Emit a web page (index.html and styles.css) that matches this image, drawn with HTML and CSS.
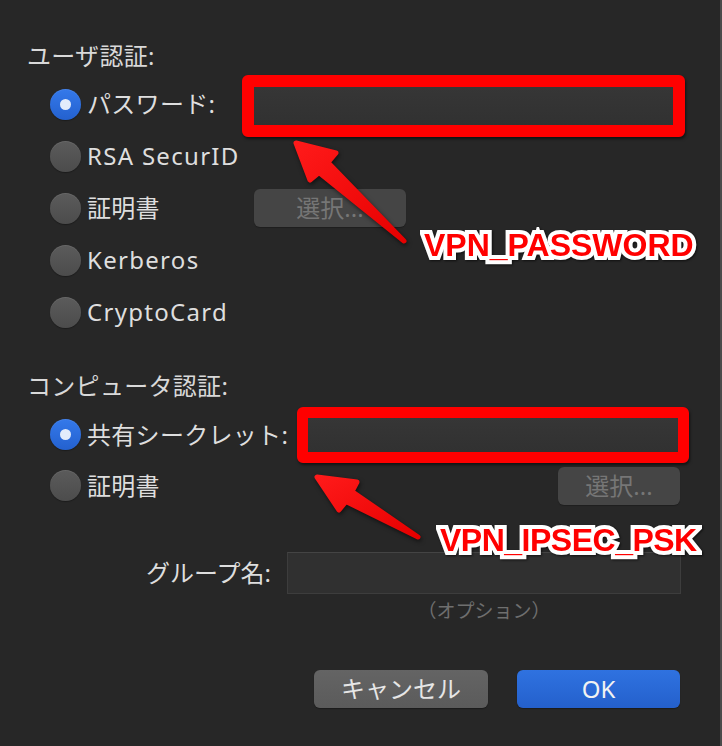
FILE: index.html
```html
<!DOCTYPE html>
<html lang="ja">
<head>
<meta charset="utf-8">
<link rel="stylesheet" href="styles.css">
</head>
<body>
<div class="dialog">
  <div class="section-label">ユーザ認証:</div>
  <div class="rows user">
    <div class="row">
      <span class="choice"><span class="radio on"></span>パスワード:</span>
      <div class="redbox rb1"><div class="field"></div></div>
    </div>
    <div class="row"><span class="choice latin"><span class="radio"></span>RSA SecurID</span></div>
    <div class="row">
      <span class="choice"><span class="radio"></span>証明書</span>
      <button class="btn-select sel1">選択...</button>
    </div>
    <div class="row"><span class="choice latin"><span class="radio"></span>Kerberos</span></div>
    <div class="row"><span class="choice latin"><span class="radio"></span>CryptoCard</span></div>
  </div>

  <div class="section-label second">コンピュータ認証:</div>
  <div class="rows computer">
    <div class="row">
      <span class="choice"><span class="radio on"></span>共有シークレット:</span>
      <div class="redbox rb2"><div class="field"></div></div>
    </div>
    <div class="row">
      <span class="choice"><span class="radio"></span>証明書</span>
      <button class="btn-select sel2">選択...</button>
    </div>
  </div>

  <div class="group-row">
    <span class="group-label">グループ名:</span>
    <div class="group-field"></div>
  </div>
  <div class="option-note">（オプション）</div>

  <div class="actions">
    <button class="btn cancel">キャンセル</button>
    <button class="btn ok">OK</button>
  </div>

  <svg class="arrows" width="722" height="746" viewBox="0 0 722 746">
    <defs>
      <linearGradient id="ag" x1="0" y1="0" x2="1" y2="1">
        <stop offset="0" stop-color="#ff1a1a"/>
        <stop offset="1" stop-color="#e60000"/>
      </linearGradient>
    </defs>
    <path class="arrow" d="M296 143 L336 153 L328 162.5 L404 241 L319 172.5 L310 180 Z"/>
    <path class="arrow" d="M317 477 L357 482 L352 491.5 L418 537 L346 501.5 L339 510 Z"/>
  </svg>
  <div class="callout c1">VPN_PASSWORD</div>
  <div class="callout c2">VPN_IPSEC_PSK</div>
</div>
</body>
</html>
```

FILE: styles.css
```css
html, body {
  margin: 0;
  padding: 0;
  background: #272727;
}

body {
  font-family: "Noto Sans", "Noto Sans CJK JP", sans-serif;
  color: #dcdcdc;
}

.dialog {
  position: relative;
  width: 722px;
  height: 746px;
  box-sizing: border-box;
  padding: 41px 0 0 27px;
  border-right: 2px solid #4a4a4a;
  overflow: hidden;
}

.section-label {
  font-size: 24px;
  line-height: 30px;
  height: 30px;
  color: #d9d9d9;
  letter-spacing: 0.3px;
}

.section-label.second {
  margin-top: 33px;
}

.rows {
  padding-left: 23px;
  margin-top: 7px;
}

.rows.computer {
  margin-top: 8px;
}

.row {
  display: grid;
  align-items: center;
  height: 52px;
  grid-template-rows: 52px;
}

.user .row {
  grid-template-columns: 204px 420px;
}

.computer .row {
  grid-template-columns: 258px 372px;
  grid-template-rows: 51px;
  height: 51px;
}

.choice {
  display: flex;
  align-items: center;
  gap: 6px;
  font-size: 24px;
  line-height: 32px;
  white-space: nowrap;
  color: #dedede;
  letter-spacing: 0.3px;
}

.choice.latin {
  letter-spacing: 1.3px;
}

.radio {
  flex: none;
  width: 31px;
  height: 31px;
  border-radius: 50%;
  background: linear-gradient(#5b5b5b, #4c4c4c);
  box-shadow: inset 0 1px 0 rgba(255,255,255,0.08), 0 1px 1px rgba(0,0,0,0.3);
  display: flex;
  align-items: center;
  justify-content: center;
}

.radio.on {
  background: linear-gradient(#3479ea, #2461cf);
}

.radio.on::after {
  content: "";
  width: 11px;
  height: 11px;
  border-radius: 50%;
  background: #e3ecfb;
}

.redbox {
  border: 12px solid #ff0000;
  border-radius: 6px;
  box-shadow: 1px 2px 3px rgba(0,0,0,0.55);
  margin-left: -12px;
}

.rb1 {
  margin-top: 4px;
  margin-right: -11px;
}

.rb1 .field {
  height: 38px;
}

.rb2 {
  border-width: 11px;
  margin-left: -11px;
  width: 370px;
}

.rb2 .field {
  height: 34px;
}

.field {
  background: linear-gradient(#363636, #313131);
}

.btn-select {
  font-family: inherit;
  font-size: 24px;
  line-height: 38px;
  height: 38px;
  padding: 0;
  border: none;
  border-radius: 6px;
  background: #454545;
  color: #767676;
  box-shadow: 0 1px 1px rgba(0,0,0,0.25);
}

.sel1 {
  width: 152px;
  justify-self: start;
}

.sel2 {
  width: 122px;
  justify-self: end;
}

.group-row {
  display: grid;
  grid-template-columns: 244px 394px;
  column-gap: 16px;
  align-items: center;
  margin-top: 41px;
}

.group-label {
  text-align: right;
  font-size: 24px;
  line-height: 32px;
  color: #dedede;
}

.group-field {
  height: 40px;
  background: #303030;
  border: 1px solid #3d3d3d;
  border-top-color: #444444;
}

.option-note {
  margin-top: 5px;
  margin-left: 260px;
  width: 394px;
  text-align: center;
  font-size: 19px;
  line-height: 24px;
  color: #6f6f6f;
}

.actions {
  display: flex;
  justify-content: flex-end;
  gap: 29px;
  padding-right: 40px;
  margin-top: 47px;
}

.btn {
  font-family: inherit;
  font-size: 24px;
  line-height: 38px;
  height: 38px;
  padding: 0;
  border: none;
  border-radius: 6px;
}

.btn.cancel {
  width: 174px;
  background: linear-gradient(#646464, #5b5b5b);
  color: #e6e6e6;
  box-shadow: 0 1px 1px rgba(0,0,0,0.3);
}

.btn.ok {
  width: 163px;
  background: linear-gradient(#2f72e0, #2460cc);
  color: #f2f2f2;
  box-shadow: 0 1px 1px rgba(0,0,0,0.3);
}

.arrows {
  position: absolute;
  left: 0;
  top: 0;
  pointer-events: none;
  filter: drop-shadow(1px 2px 2px rgba(0,0,0,0.55));
}

.arrow {
  fill: url(#ag);
  stroke: url(#ag);
  stroke-width: 5;
  stroke-linejoin: round;
}

.callout {
  position: absolute;
  font-family: "Liberation Sans", "DejaVu Sans", sans-serif;
  font-weight: bold;
  font-size: 32px;
  line-height: 32px;
  color: #ff0000;
  -webkit-text-stroke: 8px #ffffff;
  paint-order: stroke fill;
  white-space: nowrap;
  filter: drop-shadow(1px 1px 1px rgba(0,0,0,0.6));
}

.c1 {
  left: 424px;
  top: 229px;
}

.c2 {
  left: 440px;
  top: 524px;
  letter-spacing: -0.5px;
}
```
